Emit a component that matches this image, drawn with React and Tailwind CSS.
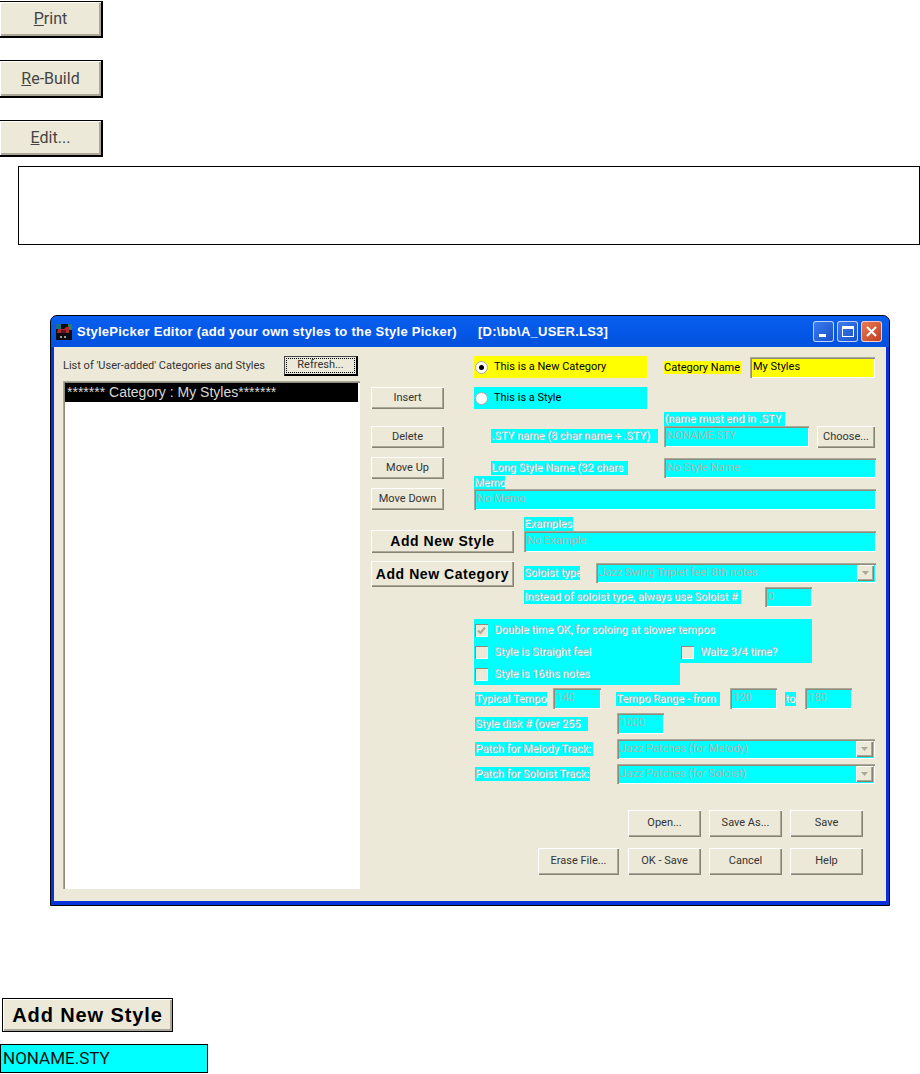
import React from 'react';

const raised = 'bg-[#ece9d8] shadow-[inset_1px_1px_0_#fff,inset_-1px_-1px_0_#85826f,inset_-2px_-2px_0_#aca899]';
const sunken = 'shadow-[inset_1px_1px_0_#aca899,inset_2px_2px_0_#8f8c7c,inset_-1px_-1px_0_#fff]';

function Btn({ w = 'w-[73px]', h = 'h-[22px]', children, extra = '' }) {
  return (
    <button className={`${w} ${h} ${raised} ${extra} shrink-0 flex items-center justify-center text-[11px] text-[#333] whitespace-nowrap`}>
      {children}
    </button>
  );
}

function ToolBtn({ h = 'h-[37px]', children }) {
  return (
    <button className={`w-[103px] ${h} bg-[#ece9d8] border-t border-l-0 border-r-2 border-b-2 border-black shadow-[inset_1px_1px_0_#fff,inset_-1px_-1px_0_#aca899,inset_-2px_-2px_0_#aca899] flex items-center justify-center text-[16px] text-[#444]`}>
      {children}
    </button>
  );
}

// disabled label, cyan backing, etched text
function Lbl({ w, children, extra = '' }) {
  return (
    <div className={`${w} ${extra} h-[14px] bg-[#00ffff] text-[11px] leading-[14px] text-[#b4c2c4] [text-shadow:1px_1px_0_#fff] whitespace-nowrap overflow-hidden shrink-0`}>
      {children}
    </div>
  );
}

function Field({ w, h = 'h-[21px]', color = 'bg-[#00ffff]', text = 'text-[#a9b8ae]', children }) {
  return (
    <div className={`${w} ${h} ${color} ${text} ${sunken} shrink-0 pl-[3px] text-[11px] flex items-center whitespace-nowrap overflow-hidden`}>
      {children}
    </div>
  );
}

function Combo({ w, children }) {
  return (
    <div className={`${w} h-[20px] bg-[#00ffff] ${sunken} shrink-0 pl-[3px] pr-[2px] flex items-center justify-between text-[11px] text-[#a9b8ae] whitespace-nowrap overflow-hidden`}>
      <span>{children}</span>
      <span className={`w-[17px] h-[16px] ${raised} flex items-center justify-center`}>
        <svg width="7" height="4" viewBox="0 0 7 4"><path d="M0 0h7L3.5 4z" fill="#aca899" /></svg>
      </span>
    </div>
  );
}

function Check({ checked }) {
  return (
    <span className="w-[13px] h-[13px] bg-[#ece9d8] shadow-[inset_1px_1px_0_#8f8c7c,inset_-1px_-1px_0_#fff] shrink-0 flex items-center justify-center">
      {checked && (
        <svg width="9" height="9" viewBox="0 0 9 9"><path d="M1 4.5L3.5 7L8 1.5" fill="none" stroke="#aca899" strokeWidth="2" /></svg>
      )}
    </span>
  );
}

function CheckRow({ checked, children, w }) {
  return (
    <div className={`${w} h-[22px] flex items-center gap-[6px] pl-[1px] text-[11px] text-[#b4c2c4] [text-shadow:1px_1px_0_#fff] whitespace-nowrap`}>
      <Check checked={checked} />
      <span>{children}</span>
    </div>
  );
}

function Radio({ on }) {
  return (
    <span className="w-[13px] h-[13px] rounded-full bg-white border border-[#aca899] shrink-0 flex items-center justify-center">
      {on && <span className="w-[5px] h-[5px] rounded-full bg-black" />}
    </span>
  );
}

function AppIcon() {
  return (
    <svg width="16" height="16" viewBox="0 0 16 16" className="shrink-0">
      <rect width="16" height="16" fill="#0b0b10" />
      <rect x="0" y="0" width="5" height="5" fill="#1d6f86" />
      <rect x="12" y="0" width="4" height="6" fill="#2a7f5f" />
      <path d="M2 5h6l2-2h3v6H1z" fill="#b3262a" />
      <rect x="5" y="6" width="5" height="3" fill="#5c1a20" />
      <rect x="4" y="12" width="2" height="2" fill="#9a9a9a" />
      <rect x="8" y="12" width="2" height="2" fill="#9a9a9a" />
    </svg>
  );
}

function TitleButtons() {
  return (
    <div className="flex gap-[3px] items-center">
      <div className="w-[21px] h-[21px] rounded-[3px] border border-white/70 bg-linear-to-br from-[#3c7df0] to-[#1a4fc8] flex items-end pl-[5px] pb-[4px]">
        <div className="w-[7px] h-[3px] bg-white" />
      </div>
      <div className="w-[21px] h-[21px] rounded-[3px] border border-white/70 bg-linear-to-br from-[#3c7df0] to-[#1a4fc8] flex items-center justify-center">
        <div className="w-[12px] h-[11px] border border-white border-t-[3px]" />
      </div>
      <div className="w-[21px] h-[21px] rounded-[3px] border border-white/70 bg-linear-to-br from-[#e87a55] to-[#c23d1c] flex items-center justify-center">
        <svg width="13" height="13" viewBox="0 0 13 13"><path d="M2 2l9 9M11 2l-9 9" stroke="#fff" strokeWidth="2" /></svg>
      </div>
    </div>
  );
}

export default function App() {
  return (
    <div className="w-[920px] h-[1074px] bg-white overflow-hidden font-['Roboto',sans-serif] text-black">
      {/* toolbar samples */}
      <div className="pt-[1px] flex flex-col">
        <ToolBtn><span><span className="underline">P</span>rint</span></ToolBtn>
        <div className="h-[22px]" />
        <ToolBtn h="h-[38px]"><span><span className="underline">R</span>e-Build</span></ToolBtn>
        <div className="h-[22px]" />
        <ToolBtn><span><span className="underline">E</span>dit...</span></ToolBtn>
      </div>

      <div className="ml-[18px] mt-[9px] w-[902px] h-[79px] border border-black" />

      {/* dialog */}
      <div className="ml-[50px] mt-[70px] w-[840px] h-[591px] border border-black rounded-t-[7px] bg-[#0831d9] flex flex-col overflow-hidden">
        <div className="h-[31px] shrink-0 bg-linear-to-b from-[#0a5ff0] via-[#0558e8] to-[#0350dc] flex items-center pl-[5px] pr-[7px] font-['Liberation_Sans',sans-serif] font-bold text-[13px] tracking-[0.25px] text-white whitespace-nowrap">
          <AppIcon />
          <span className="ml-[5px] w-[401px]">StylePicker Editor (add your own styles to the Style Picker)</span>
          <span>[D:\bb\A_USER.LS3]</span>
          <div className="ml-auto"><TitleButtons /></div>
        </div>

        <div className="mx-[3px] mb-[4px] flex-1 bg-[#ece9d8] flex pl-[9px] pt-[9px]">
          {/* list column */}
          <div className="w-[297px] shrink-0">
            <div className="h-[20px] flex items-center justify-between pr-[2px] text-[11px] text-[#333] whitespace-nowrap">
              <span>List of 'User-added' Categories and Styles</span>
              <button className="w-[74px] h-[20px] bg-[#ece9d8] border-t border-l border-r-2 border-b-2 border-t-[#444] border-l-[#444] border-r-black border-b-black p-[1px]">
                <span className="w-full h-full border border-dotted border-black flex items-center justify-center text-[11px]">Refresh...</span>
              </button>
            </div>
            <div className={`mt-[5px] h-[508px] bg-white p-[2px] ${sunken}`}>
              <div className="h-[19px] bg-black text-[#d8d8d8] text-[14px] leading-[19px] pl-[2px] font-['Liberation_Sans',sans-serif] whitespace-nowrap overflow-hidden">
                ******* Category : My Styles*******
              </div>
            </div>
          </div>

          <div className="ml-[11px] w-[505px] shrink-0">
            {/* top block */}
            <div className="flex">
              <div className="w-[73px] shrink-0 pt-[31px] flex flex-col">
                <Btn>Insert</Btn>
                <div className="h-[17px]" />
                <Btn>Delete</Btn>
                <div className="h-[9px]" />
                <Btn>Move Up</Btn>
                <div className="h-[9px]" />
                <Btn>Move Down</Btn>
              </div>

              <div className="ml-[30px] w-[402px] shrink-0 flex flex-col">
                <div className="flex items-center h-[22px]">
                  <div className="w-[173px] h-[22px] bg-[#ffff00] flex items-center gap-[6px] pl-[1px] text-[11px] whitespace-nowrap">
                    <Radio on />This is a New Category
                  </div>
                  <div className="ml-[17px] w-[77px] h-[13px] bg-[#ffff00] text-[11px] leading-[13px] whitespace-nowrap overflow-hidden">Category Name</div>
                  <div className="ml-[9px]">
                    <Field w="w-[125px]" color="bg-[#ffff00]" text="text-black">My Styles</Field>
                  </div>
                </div>

                <div className="mt-[9px] w-[173px] h-[22px] bg-[#00ffff] flex items-center gap-[6px] pl-[1px] text-[11px] whitespace-nowrap">
                  <Radio />This is a Style
                </div>

                <div className="mt-[3px] flex">
                  <div className="pl-[17px] w-[190px] shrink-0 pt-[17px]">
                    <Lbl w="w-[167px]">.STY name (8 char name + .STY)</Lbl>
                  </div>
                  <div className="flex flex-col">
                    <Lbl w="w-[121px]">(name must end in .STY</Lbl>
                    <div className="flex">
                      <Field w="w-[145px]">NONAME.STY</Field>
                      <div className="ml-[8px]"><Btn w="w-[58px]">Choose...</Btn></div>
                    </div>
                  </div>
                </div>

                <div className="mt-[10px] flex h-[18px]">
                  <div className="pl-[17px] w-[190px] shrink-0 pt-[3px]">
                    <Lbl w="w-[137px]">Long Style Name (32 chars</Lbl>
                  </div>
                  <Field w="w-[212px]" h="h-[20px]">No Style Name</Field>
                </div>

                <Lbl w="w-[31px]" extra="!h-[13px] leading-[13px]">Memo</Lbl>
                <Field w="w-[402px]">No Memo</Field>
              </div>
            </div>

            {/* add buttons + example block */}
            <div className="mt-[7px] flex">
              <div className="w-[143px] shrink-0 pt-[13px] flex flex-col gap-[8px]">
                <Btn w="w-[143px]" h="h-[23px]"><span className="font-['Liberation_Sans',sans-serif] text-[14px] font-bold text-black tracking-[0.55px]">Add New Style</span></Btn>
                <Btn w="w-[143px]" h="h-[26px]"><span className="font-['Liberation_Sans',sans-serif] text-[14px] font-bold text-black tracking-[0.55px]">Add New Category</span></Btn>
              </div>
              <div className="ml-[10px] flex flex-col">
                <Lbl w="w-[49px]">Examples</Lbl>
                <Field w="w-[352px]">No Example</Field>
                <div className="mt-[11px] flex items-center">
                  <Lbl w="w-[56px]">Soloist type</Lbl>
                  <div className="ml-[16px]"><Combo w="w-[280px]">Jazz Swing Triplet feel 8th notes</Combo></div>
                </div>
                <div className="mt-[4px] flex items-center">
                  <Lbl w="w-[217px]">Instead of soloist type, always  use Soloist #</Lbl>
                  <div className="ml-[24px]"><Field w="w-[47px]" h="h-[20px]">0</Field></div>
                </div>
              </div>
            </div>

            {/* options */}
            <div className="mt-[12px] pl-[103px] flex flex-col">
              <div className="w-[338px] bg-[#00ffff]">
                <CheckRow w="w-full" checked>Double time OK, for soloing at slower tempos</CheckRow>
                <div className="flex">
                  <CheckRow w="w-[206px]">Style is Straight feel</CheckRow>
                  <CheckRow w="w-[132px]">Waltz 3/4 time?</CheckRow>
                </div>
              </div>
              <div className="w-[206px] bg-[#00ffff]">
                <CheckRow w="w-full">Style is 16ths notes</CheckRow>
              </div>

              <div className="mt-[3px] pl-[1px] flex items-center">
                <Lbl w="w-[72px]">Typical Tempo</Lbl>
                <div className="ml-[6px]"><Field w="w-[48px]">140</Field></div>
                <div className="ml-[15px]"><Lbl w="w-[104px]">Tempo Range - from</Lbl></div>
                <div className="ml-[10px]"><Field w="w-[47px]">120</Field></div>
                <div className="ml-[8px]"><Lbl w="w-[11px]">to</Lbl></div>
                <div className="ml-[9px]"><Field w="w-[47px]">180</Field></div>
              </div>

              <div className="mt-[4px] pl-[1px] flex items-center">
                <Lbl w="w-[113px]">Style disk #  (over 255</Lbl>
                <div className="ml-[29px]"><Field w="w-[47px]">1000</Field></div>
              </div>

              <div className="mt-[5px] pl-[1px] flex items-center">
                <Lbl w="w-[118px]">Patch for Melody Track:</Lbl>
                <div className="ml-[24px]"><Combo w="w-[258px]">Jazz Patches (for Melody)</Combo></div>
              </div>

              <div className="mt-[5px] pl-[1px] flex items-center">
                <Lbl w="w-[115px]">Patch for Soloist Track:</Lbl>
                <div className="ml-[27px]"><Combo w="w-[258px]">Jazz Patches (for Soloist)</Combo></div>
              </div>
            </div>

            {/* footer buttons */}
            <div className="mt-[26px] pr-[13px] flex justify-end gap-[8px]">
              <Btn h="h-[27px]">Open...</Btn>
              <Btn h="h-[27px]">Save As...</Btn>
              <Btn h="h-[27px]">Save</Btn>
            </div>
            <div className="mt-[11px] pr-[13px] flex justify-end gap-[8px]">
              <div className="mr-[1px]"><Btn w="w-[81px]" h="h-[27px]">Erase File...</Btn></div>
              <Btn h="h-[27px]">OK - Save</Btn>
              <Btn h="h-[27px]">Cancel</Btn>
              <Btn h="h-[27px]">Help</Btn>
            </div>
          </div>
        </div>
      </div>

      {/* samples under the dialog */}
      <div className="ml-[2px] mt-[92px] w-[171px] h-[34px] bg-[#ece9d8] border border-black shadow-[inset_1px_1px_0_#fff,inset_-1px_-1px_0_#aca899,inset_-2px_-2px_0_#aca899] flex items-center justify-center font-['Liberation_Sans',sans-serif] text-[20px] font-bold tracking-[0.9px]">
        Add New Style
      </div>
      <div className="mt-[12px] w-[208px] h-[29px] bg-[#00ffff] border border-black pl-[2px] flex items-center text-[17px] text-[#111]">
        NONAME.STY
      </div>
    </div>
  );
}
